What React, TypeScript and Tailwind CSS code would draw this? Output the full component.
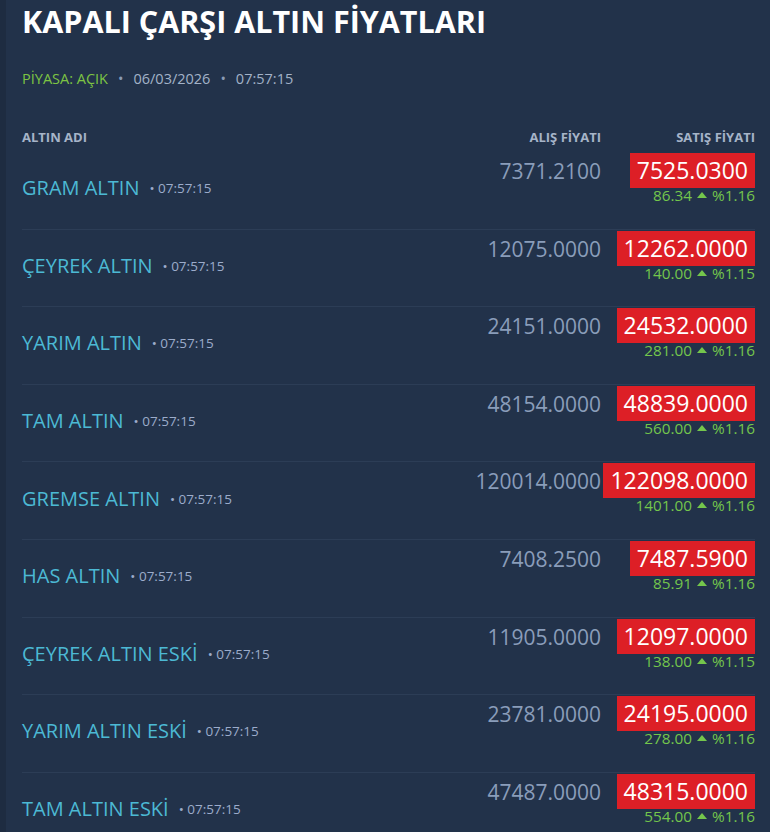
import React from 'react';

type Row = {
  name: string;
  buy: string;
  sell: string;
  diff: string;
  pct: string;
  extra?: string;
};

const rows: Row[] = [
  { name: 'GRAM ALTIN', buy: '7371.2100', sell: '7525.0300', diff: '86.34', pct: '%1.16' },
  { name: 'ÇEYREK ALTIN', buy: '12075.0000', sell: '12262.0000', diff: '140.00', pct: '%1.15' },
  { name: 'YARIM ALTIN', buy: '24151.0000', sell: '24532.0000', diff: '281.00', pct: '%1.16' },
  { name: 'TAM ALTIN', buy: '48154.0000', sell: '48839.0000', diff: '560.00', pct: '%1.16' },
  { name: 'GREMSE ALTIN', buy: '120014.0000', sell: '122098.0000', diff: '1401.00', pct: '%1.16', extra: '1' },
  { name: 'HAS ALTIN', buy: '7408.2500', sell: '7487.5900', diff: '85.91', pct: '%1.16' },
  { name: 'ÇEYREK ALTIN ESKİ', buy: '11905.0000', sell: '12097.0000', diff: '138.00', pct: '%1.15' },
  { name: 'YARIM ALTIN ESKİ', buy: '23781.0000', sell: '24195.0000', diff: '278.00', pct: '%1.16' },
  { name: 'TAM ALTIN ESKİ', buy: '47487.0000', sell: '48315.0000', diff: '554.00', pct: '%1.16' },
];

const TIME = '07:57:15';

function PriceRow({ row }: { row: Row }) {
  return (
    <div className="relative flex h-[77.6px] border-b border-[#2c3d56]">
      {/* name */}
      <div className="flex flex-1 items-center pb-[4px]">
        <span className="text-[20px] text-[#4cb9d4]">{row.name}</span>
        <span className="ml-[10px] text-[13.5px] text-[#9caccb]">• {TIME}</span>
      </div>

      {/* alış */}
      <div className="w-[200px] pt-[4px] text-right text-[21px] leading-[30px] text-[#8a9dba]">
        {row.buy}
      </div>

      {/* satış */}
      <div className="ml-[4px] flex w-[150px] flex-col items-end pt-[1px]">
        <span className="whitespace-nowrap bg-[#dd1f26] px-[7px] text-[23px] leading-[35px] text-white">
          {row.sell}
        </span>
        <span className="-mt-[2px] flex items-center whitespace-nowrap text-[15.3px] leading-[18px] text-[#74c64c]">
          {row.diff}
          <svg viewBox="0 0 10 6" className="mx-[5px] h-[6px] w-[10px] fill-current">
            <path d="M0 6 L5 0 L10 6 Z" />
          </svg>
          {row.pct}
        </span>
      </div>

      {row.extra && (
        <span className="absolute left-[757px] top-[3px] text-[23px] leading-[35px] text-[#8a9dba]">
          {row.extra}
        </span>
      )}
    </div>
  );
}

export default function App() {
  return (
    <div
      className="flex h-[832px] w-[770px] overflow-hidden bg-[#22324a]"
      style={{ fontFamily: '"Open Sans", "Noto Sans", sans-serif' }}
    >
      <div className="w-[6px] shrink-0 bg-[#1e2c41]" />
      <div className="flex-1 pl-[16px] pr-[15px]">
        <h1 className="pt-[1px] text-[30.5px] font-bold leading-[40px] text-white">
          KAPALI ÇARŞI ALTIN FİYATLARI
        </h1>

        <div className="mt-[28px] flex items-center text-[14.5px] leading-[20px]">
          <span className="text-[#7dc443]">PİYASA: AÇIK</span>
          <span className="mx-[10px] text-[#8a9bb5]">•</span>
          <span className="text-[#a3b2c8]">06/03/2026</span>
          <span className="mx-[10px] text-[#8a9bb5]">•</span>
          <span className="text-[#a3b2c8]">{TIME}</span>
        </div>

        <div className="mt-[40px] flex text-[13px] font-bold leading-[16px] text-[#a6b4c8]">
          <div className="flex-1">ALTIN ADI</div>
          <div className="w-[200px] text-right">ALIŞ FİYATI</div>
          <div className="ml-[4px] w-[150px] text-right">SATIŞ FİYATI</div>
        </div>

        <div className="mt-[7px]">
          {rows.map((r) => (
            <PriceRow key={r.name} row={r} />
          ))}
        </div>
      </div>
    </div>
  );
}
